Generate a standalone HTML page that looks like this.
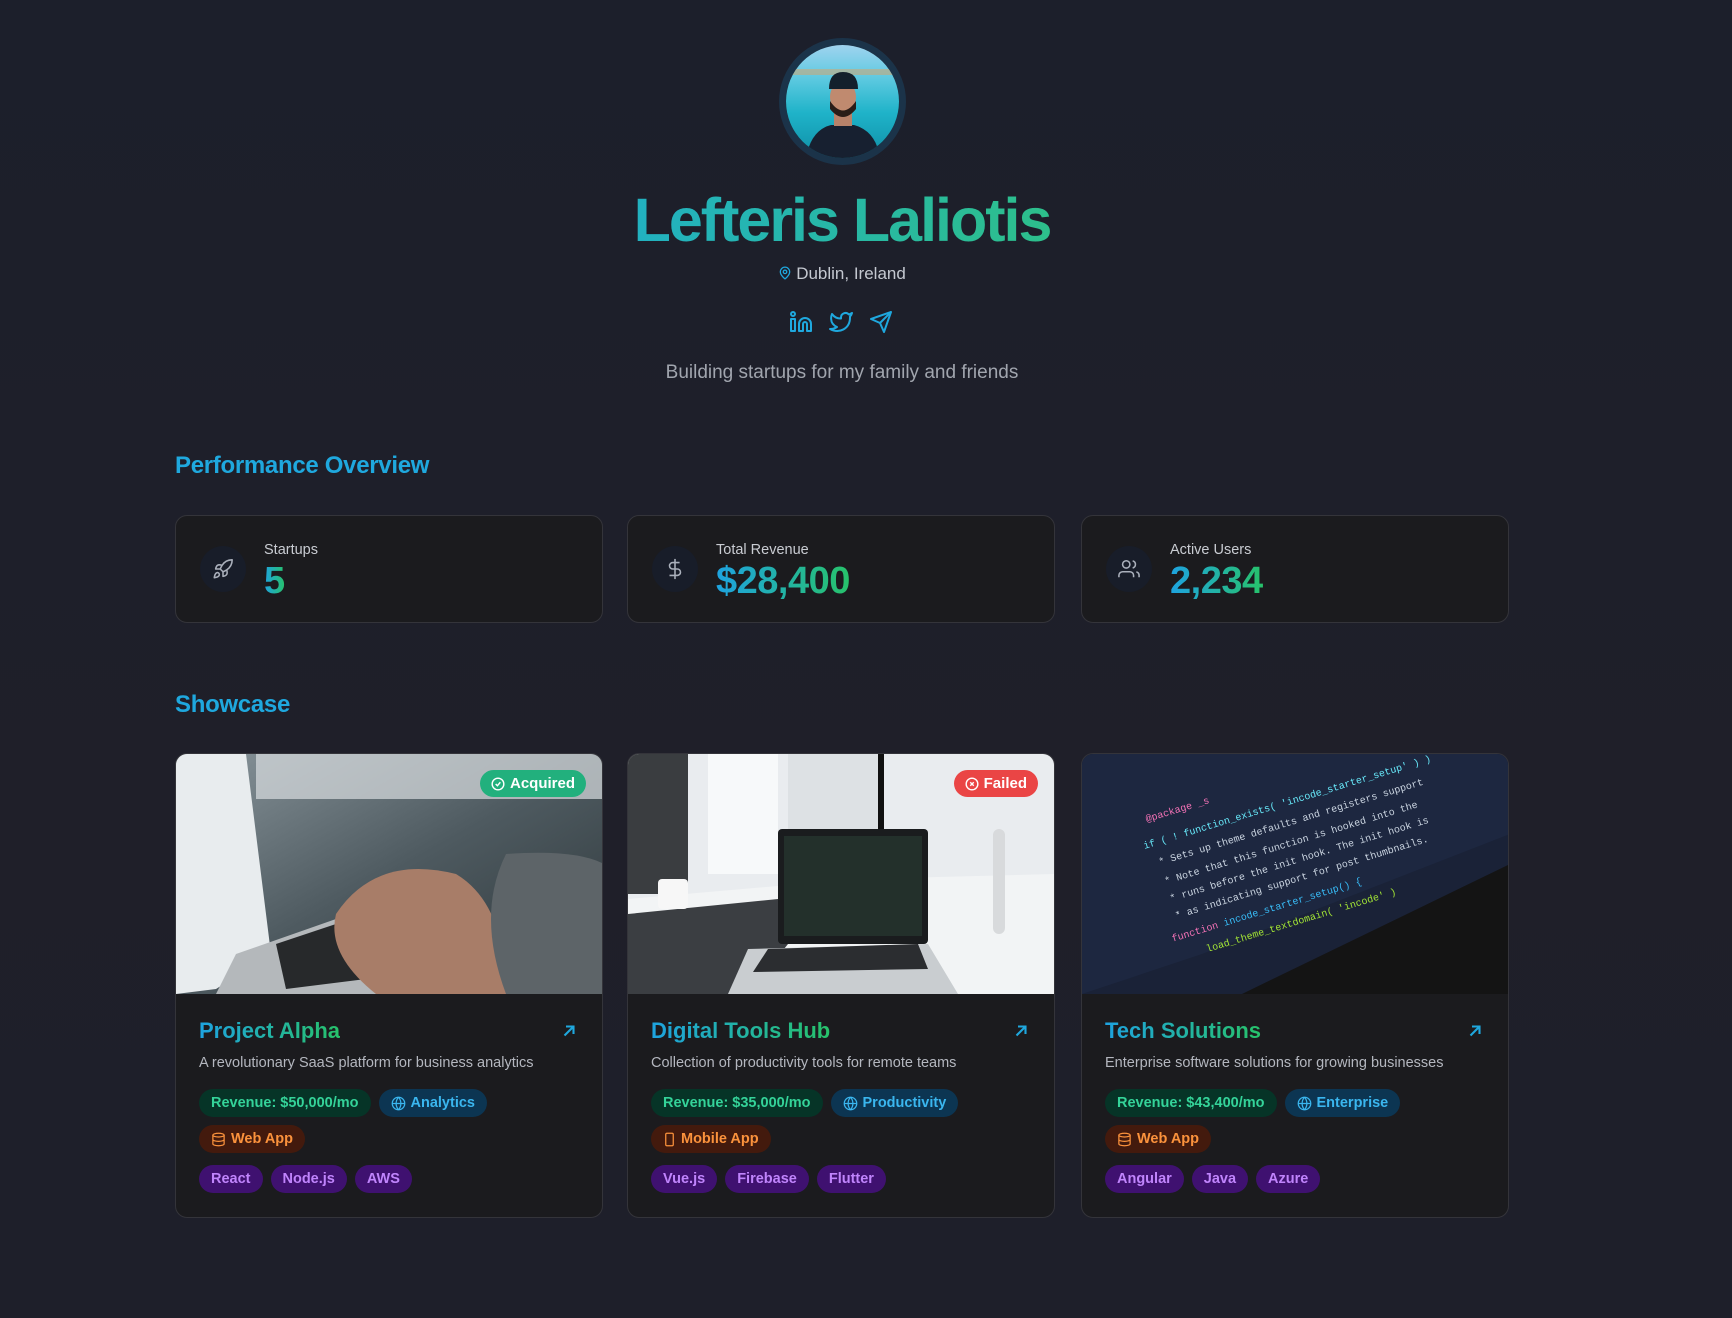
<!DOCTYPE html>
<html><head><meta charset="utf-8"><style>
*{box-sizing:border-box;margin:0;padding:0}
html,body{width:1732px;height:1318px;overflow:hidden}
body{background:linear-gradient(180deg,#1c1f2b 0%,#1f1f29 60%,#1e1f2a 100%);font-family:"Liberation Sans",sans-serif;color:#e5e7eb;position:relative}
.abs{position:absolute}
.avatar{left:779px;top:38px;width:127px;height:127px;border-radius:50%;border:7px solid #1b3349;overflow:hidden;background:#111}
.name{left:0;width:1684px;top:180px;text-align:center;font-size:61px;font-weight:700;letter-spacing:-2px;line-height:80px}
.name span{background:linear-gradient(90deg,#22b1c0,#2dbf8b);-webkit-background-clip:text;background-clip:text;color:transparent}
.loc{left:0;width:1684px;top:264px;text-align:center;font-size:17px;color:#c4c8d0}
.bio{left:0;width:1684px;top:362px;text-align:center;font-size:19px;color:#a1a5ae}
.h2{left:175px;font-size:24px;font-weight:700;color:#1fa8de;letter-spacing:-0.3px}
.stat{top:515px;width:428px;height:108px;border:1px solid #34343a;border-radius:12px;background:#1b1b1e}
.stat .ic{position:absolute;left:24px;top:30px;width:46px;height:46px;border-radius:50%;background:#181d29;display:flex;align-items:center;justify-content:center}
.stat .lb{position:absolute;left:88px;top:26px;font-size:14.5px;color:#c9ccd2}
.stat .v{position:absolute;left:88px;top:42px;font-size:38px;font-weight:700;letter-spacing:-0.5px;background:linear-gradient(90deg,#1ea3e0,#27c26a);-webkit-background-clip:text;background-clip:text;color:transparent;line-height:46px}
.card{top:753px;width:428px;height:465px;border:1px solid #34343a;border-radius:12px;background:#1b1b1e;overflow:hidden}
.card .img{position:absolute;left:0;top:0;width:428px;height:240px;overflow:hidden}
.card .t{position:absolute;left:23px;top:264px;font-size:22px;font-weight:700;background:linear-gradient(90deg,#1ea3e0,#27c26a);-webkit-background-clip:text;background-clip:text;color:transparent}
.card .arr{position:absolute;right:24px;top:268px}
.card .d{position:absolute;left:23px;top:301px;font-size:14.5px;color:#b4b7bf}
.row{position:absolute;left:23px;display:flex;gap:8px}
.b{height:28px;border-radius:14px;padding:0 12px;display:flex;align-items:center;gap:5px;font-size:14.5px;font-weight:700}
.g{background:#063427;color:#34d399}
.bl{background:#0c3552;color:#3ab6ef}
.o{background:#431a0d;color:#fb923c}
.p{background:#3f1170;color:#c084fc}
.st{position:absolute;top:16px;height:27px;border-radius:14px;padding:0 11px;display:flex;align-items:center;gap:5px;font-size:15px;font-weight:700;color:#fff}
</style></head><body>

<div class="abs avatar"><svg width="113" height="113" viewBox="0 0 113 113">
<defs><linearGradient id="sea" x1="0" y1="0" x2="0" y2="1"><stop offset="0" stop-color="#9fd3ef"/><stop offset=".3" stop-color="#5cc9e0"/><stop offset=".6" stop-color="#1fb3c9"/><stop offset="1" stop-color="#0f8fa6"/></linearGradient></defs>
<rect width="113" height="113" fill="url(#sea)"/>
<rect x="0" y="24" width="113" height="6" fill="#c8a87a" opacity=".6"/>
<path d="M20 113 Q25 85 45 80 L68 80 Q90 86 94 113Z" fill="#172030"/>
<rect x="48" y="55" width="18" height="26" fill="#b7826a"/>
<ellipse cx="57" cy="52" rx="13" ry="16" fill="#c08a6f"/>
<path d="M44 56 Q57 75 70 56 L70 64 Q57 80 44 64Z" fill="#2a1d18"/>
<path d="M43 44 Q43 27 57 27 Q72 27 72 44 Z" fill="#13202c"/>
</svg></div>

<div class="abs name"><span>Lefteris Laliotis</span></div>
<div class="abs loc"><svg width="14" height="16" viewBox="0 0 24 24" fill="none" stroke="#1fa8de" stroke-width="2.2" style="vertical-align:-2px;margin-right:4px"><path d="M20 10c0 6-8 12-8 12s-8-6-8-12a8 8 0 0 1 16 0z"/><circle cx="12" cy="10" r="3"/></svg>Dublin, Ireland</div>

<div class="abs" style="left:789px;top:310px;display:flex;gap:16px">
<svg width="24" height="24" viewBox="0 0 24 24" fill="none" stroke="#1fa8de" stroke-width="2" stroke-linejoin="round"><path d="M16 8a6 6 0 0 1 6 6v7h-4v-7a2 2 0 0 0-4 0v7h-4v-7a6 6 0 0 1 6-6z"/><rect x="2" y="9" width="4" height="12"/><circle cx="4" cy="4" r="2"/></svg>
<svg width="24" height="24" viewBox="0 0 24 24" fill="none" stroke="#1fa8de" stroke-width="2" stroke-linejoin="round"><path d="M23 3a10.9 10.9 0 0 1-3.140 1.53 4.48 4.48 0 0 0-7.86 3v1A10.66 10.66 0 0 1 3 4s-4 9 5 13a11.64 11.64 0 0 1-7 2c9 5 20 0 20-11.5a4.5 4.5 0 0 0-.08-.83A7.72 7.72 0 0 0 23 3z"/></svg>
<svg width="24" height="24" viewBox="0 0 24 24" fill="none" stroke="#1fa8de" stroke-width="2" stroke-linejoin="round"><path d="M22 2L11 13"/><path d="M22 2l-7 20-4-9-9-4 20-7z"/></svg>
</div>

<div class="abs bio">Building startups for my family and friends</div>

<div class="abs h2" style="top:452px">Performance Overview</div>

<div class="abs stat" style="left:175px"><div class="ic"><svg width="22" height="22" viewBox="0 0 24 24" fill="none" stroke="#aab0bb" stroke-width="1.7" stroke-linejoin="round"><path d="M4.5 16.5c-1.5 1.26-2 5-2 5s3.740-.5 5-2c.71-.84.7-2.13-.09-2.91a2.18 2.18 0 0 0-2.91-.09z"/><path d="M12 15l-3-3a22 22 0 0 1 2-3.95A12.88 12.88 0 0 1 22 2c0 2.72-.78 7.5-6 11a22.35 22.35 0 0 1-4 2z"/><path d="M9 12H4s.55-3.03 2-4c1.62-1.08 5 0 5 0"/><path d="M12 15v5s3.03-.55 4-2c1.08-1.62 0-5 0-5"/></svg></div><div class="lb">Startups</div><div class="v">5</div></div>
<div class="abs stat" style="left:627px"><div class="ic"><svg width="22" height="22" viewBox="0 0 24 24" fill="none" stroke="#aab0bb" stroke-width="1.7"><path d="M12 1v22"/><path d="M17 5H9.5a3.5 3.5 0 0 0 0 7h5a3.5 3.5 0 0 1 0 7H6"/></svg></div><div class="lb">Total Revenue</div><div class="v">$28,400</div></div>
<div class="abs stat" style="left:1081px"><div class="ic"><svg width="22" height="22" viewBox="0 0 24 24" fill="none" stroke="#aab0bb" stroke-width="1.7"><path d="M17 21v-2a4 4 0 0 0-4-4H5a4 4 0 0 0-4 4v2"/><circle cx="9" cy="7" r="4"/><path d="M23 21v-2a4 4 0 0 0-3-3.87"/><path d="M16 3.13a4 4 0 0 1 0 7.75"/></svg></div><div class="lb">Active Users</div><div class="v">2,234</div></div>

<div class="abs h2" style="top:691px">Showcase</div>

<!-- card 1 -->
<div class="abs card" style="left:175px">
<div class="img"><svg width="428" height="240">
<defs><linearGradient id="c1" x1="0" y1="0" x2="1" y2="1"><stop offset="0" stop-color="#8a969c"/><stop offset=".5" stop-color="#4e5a60"/><stop offset="1" stop-color="#2c3538"/></linearGradient></defs>
<rect width="428" height="240" fill="url(#c1)"/>
<rect x="80" y="0" width="348" height="45" fill="#d9dde0" opacity=".7"/>
<path d="M0 0 L70 0 L95 200 L40 235 L0 240Z" fill="#e8ecee"/>
<path d="M60 200 L260 130 L300 240 L40 240Z" fill="#b4b8bb"/>
<path d="M100 190 L250 140 L270 215 L110 235Z" fill="#27292b"/>
<path d="M160 160 Q200 100 280 120 Q330 150 330 240 L200 240 Q150 200 160 160Z" fill="#a87d68"/>
<path d="M330 100 Q400 95 428 110 L428 240 L330 240 Q300 160 330 100Z" fill="#5d6468"/>
</svg></div>
<div class="st" style="right:16px;background:#22b07d"><svg width="14" height="14" viewBox="0 0 24 24" fill="none" stroke="#fff" stroke-width="2.4"><circle cx="12" cy="12" r="10"/><path d="M8 12l3 3 5-6"/></svg>Acquired</div>
<div class="t">Project Alpha</div>
<svg class="arr" width="18" height="18" viewBox="0 0 24 24" fill="none" stroke="#1fa8de" stroke-width="2.8"><path d="M6 18L17 7M8 6h10v10"/></svg>
<div class="d">A revolutionary SaaS platform for business analytics</div>
<div class="row" style="top:335px"><div class="b g">Revenue: $50,000/mo</div><div class="b bl"><svg width="15" height="15" viewBox="0 0 24 24" fill="none" stroke="currentColor" stroke-width="2"><circle cx="12" cy="12" r="10"/><path d="M2 12h20M12 2a15 15 0 0 1 0 20M12 2a15 15 0 0 0 0 20"/></svg>Analytics</div></div>
<div class="row" style="top:371px"><div class="b o"><svg width="15" height="15" viewBox="0 0 24 24" fill="none" stroke="currentColor" stroke-width="2"><ellipse cx="12" cy="5" rx="9" ry="3"/><path d="M21 12c0 1.66-4 3-9 3s-9-1.34-9-3M3 5v14c0 1.66 4 3 9 3s9-1.34 9-3V5"/></svg>Web App</div></div>
<div class="row" style="top:411px"><div class="b p">React</div><div class="b p">Node.js</div><div class="b p">AWS</div></div>
</div>

<!-- card 2 -->
<div class="abs card" style="left:627px">
<div class="img"><svg width="428" height="240">
<rect width="428" height="240" fill="#e9ecef"/>
<rect x="0" y="0" width="60" height="140" fill="#3a3d40"/>
<rect x="80" y="0" width="70" height="120" fill="#f7f9fa"/>
<rect x="160" y="0" width="90" height="140" fill="#dde1e4"/>
<rect x="250" y="0" width="6" height="130" fill="#111"/>
<path d="M0 145 L230 125 L428 120 L428 240 L0 240Z" fill="#f2f4f5"/>
<path d="M0 160 L200 140 L120 240 L0 240Z" fill="#3b3e42"/>
<rect x="30" y="125" width="30" height="30" rx="4" fill="#f7f7f7"/>
<rect x="150" y="75" width="150" height="115" rx="4" fill="#1a1c1e"/>
<rect x="156" y="82" width="138" height="100" fill="#23302b"/>
<path d="M120 195 L300 190 L330 240 L100 240Z" fill="#c9cdd0"/>
<path d="M140 195 L290 190 L300 215 L125 218Z" fill="#2b2d30"/>
<rect x="365" y="75" width="12" height="105" rx="6" fill="#d8dadc"/>
</svg></div>
<div class="st" style="right:16px;background:#ea4545"><svg width="14" height="14" viewBox="0 0 24 24" fill="none" stroke="#fff" stroke-width="2.4"><circle cx="12" cy="12" r="10"/><path d="M9 9l6 6M15 9l-6 6"/></svg>Failed</div>
<div class="t">Digital Tools Hub</div>
<svg class="arr" width="18" height="18" viewBox="0 0 24 24" fill="none" stroke="#1fa8de" stroke-width="2.8"><path d="M6 18L17 7M8 6h10v10"/></svg>
<div class="d">Collection of productivity tools for remote teams</div>
<div class="row" style="top:335px"><div class="b g">Revenue: $35,000/mo</div><div class="b bl"><svg width="15" height="15" viewBox="0 0 24 24" fill="none" stroke="currentColor" stroke-width="2"><circle cx="12" cy="12" r="10"/><path d="M2 12h20M12 2a15 15 0 0 1 0 20M12 2a15 15 0 0 0 0 20"/></svg>Productivity</div></div>
<div class="row" style="top:371px"><div class="b o"><svg width="13" height="15" viewBox="0 0 18 24" fill="none" stroke="currentColor" stroke-width="2"><rect x="3" y="2" width="12" height="20" rx="2"/></svg>Mobile App</div></div>
<div class="row" style="top:411px"><div class="b p">Vue.js</div><div class="b p">Firebase</div><div class="b p">Flutter</div></div>
</div>

<!-- card 3 -->
<div class="abs card" style="left:1081px">
<div class="img"><svg width="428" height="240">
<rect width="428" height="240" fill="#1a2237"/>
<path d="M0 0 L428 0 L428 80 L120 200 L0 240Z" fill="#1d2740"/>
<path d="M160 240 L428 110 L428 240Z" fill="#141414"/>
<g font-family="Liberation Mono,monospace" font-size="10" transform="rotate(-17 200 100)">
<text x="80" y="30" fill="#f472b6">@package _s</text>
<text x="70" y="55" fill="#67e8f9">if ( ! function_exists( 'incode_starter_setup' ) )</text>
<text x="80" y="75" fill="#cbd5e1">* Sets up theme defaults and registers support</text>
<text x="80" y="95" fill="#cbd5e1">* Note that this function is hooked into the</text>
<text x="80" y="113" fill="#cbd5e1">* runs before the init hook. The init hook is</text>
<text x="80" y="131" fill="#cbd5e1">* as indicating support for post thumbnails.</text>
<text x="70" y="152" fill="#f472b6">function <tspan fill="#38bdf8">incode_starter_setup() {</tspan></text>
<text x="100" y="172" fill="#a3e635">load_theme_textdomain( 'incode' )</text>
</g>
</svg></div>
<div class="t">Tech Solutions</div>
<svg class="arr" width="18" height="18" viewBox="0 0 24 24" fill="none" stroke="#1fa8de" stroke-width="2.8"><path d="M6 18L17 7M8 6h10v10"/></svg>
<div class="d">Enterprise software solutions for growing businesses</div>
<div class="row" style="top:335px"><div class="b g">Revenue: $43,400/mo</div><div class="b bl"><svg width="15" height="15" viewBox="0 0 24 24" fill="none" stroke="currentColor" stroke-width="2"><circle cx="12" cy="12" r="10"/><path d="M2 12h20M12 2a15 15 0 0 1 0 20M12 2a15 15 0 0 0 0 20"/></svg>Enterprise</div></div>
<div class="row" style="top:371px"><div class="b o"><svg width="15" height="15" viewBox="0 0 24 24" fill="none" stroke="currentColor" stroke-width="2"><ellipse cx="12" cy="5" rx="9" ry="3"/><path d="M21 12c0 1.66-4 3-9 3s-9-1.34-9-3M3 5v14c0 1.66 4 3 9 3s9-1.34 9-3V5"/></svg>Web App</div></div>
<div class="row" style="top:411px"><div class="b p">Angular</div><div class="b p">Java</div><div class="b p">Azure</div></div>
</div>

</body></html>
